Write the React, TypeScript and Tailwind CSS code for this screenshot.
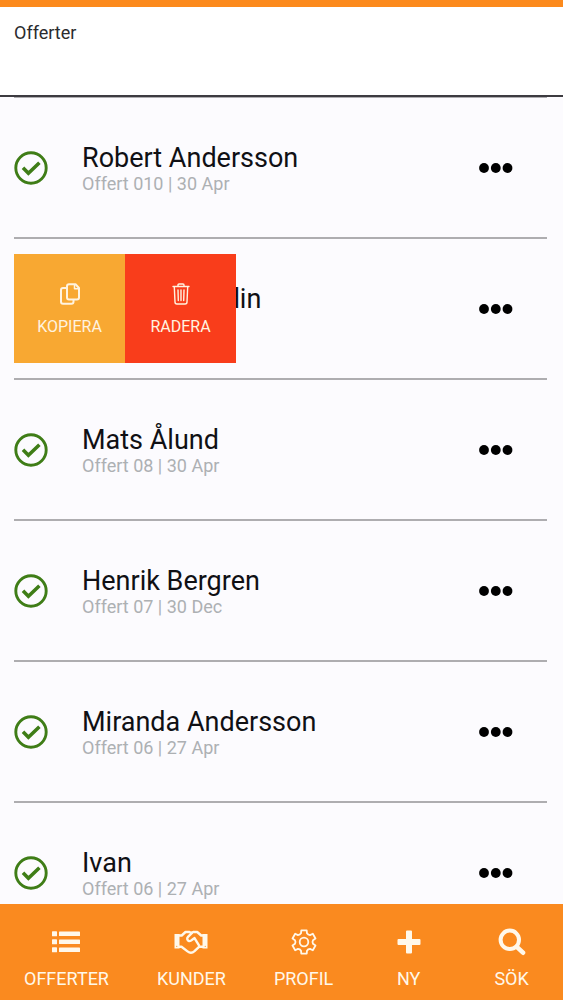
import React from 'react';

interface Offer {
  id: number;
  name: string;
  number: string;
  date: string;
  swiped?: boolean;
}

const offers: Offer[] = [
  { id: 1, name: 'Robert Andersson', number: '010', date: '30 Apr' },
  { id: 2, name: 'Marcus Sundin', number: '09', date: '30 Apr', swiped: true },
  { id: 3, name: 'Mats Ålund', number: '08', date: '30 Apr' },
  { id: 4, name: 'Henrik Bergren', number: '07', date: '30 Dec' },
  { id: 5, name: 'Miranda Andersson', number: '06', date: '27 Apr' },
  { id: 6, name: 'Ivan', number: '06', date: '27 Apr' },
];

const CheckIcon = () => (
  <svg viewBox="0 0 34 34" className="size-[34px] shrink-0 text-[#3f7d17]" fill="none" stroke="currentColor" aria-hidden="true">
    <circle cx="17" cy="17" r="15.2" strokeWidth="2.9" />
    <path d="M9 16.800l5.400 5.400L25.400 11.800" strokeWidth="3.6" />
  </svg>
);

const DotsIcon = () => (
  <svg viewBox="0 0 34 10" className="h-[10px] w-[34px]" fill="currentColor" aria-hidden="true">
    <circle cx="5" cy="5" r="4.9" />
    <circle cx="16.800" cy="5" r="4.9" />
    <circle cx="28.500" cy="5" r="4.9" />
  </svg>
);

const CopyIcon = () => (
  <svg viewBox="0 0 20 22" className="h-[22px] w-5" fill="none" stroke="currentColor" strokeWidth="2" strokeLinejoin="round" aria-hidden="true">
    <path d="M9 1.200h6.500l3.500 3.800v9.500a2 2 0 0 1-2 2H9a2 2 0 0 1-2-2V3.200a2 2 0 0 1 2-2z" />
    <path d="M14.500 1.200v4.600H19" strokeWidth="1.500" />
    <path d="M6.500 5H3a2 2 0 0 0-2 2v11.800a2 2 0 0 0 2 2h8.500a2 2 0 0 0 2-2v-2" />
  </svg>
);

const TrashIcon = () => (
  <svg viewBox="0 0 18 22" className="h-[22px] w-[18px]" fill="none" stroke="currentColor" strokeWidth="1.4" strokeLinecap="round" strokeLinejoin="round" aria-hidden="true">
    <path d="M1 3.500h16M6 3.300V2a1 1 0 0 1 1-1h4a1 1 0 0 1 1 1v1.300" />
    <path d="M2.300 3.700l.7 15.300a2 2 0 0 0 2 2h8a2 2 0 0 0 2-2l.7-15.300" />
    <path d="M6 7l.3 10.500M9 7v10.500M12 7l-.3 10.500" />
  </svg>
);

const ListIcon = () => (
  <svg viewBox="0 0 28 22" className="h-[22px] w-7" fill="currentColor" aria-hidden="true">
    {[0, 8, 16].map((y) => (
      <React.Fragment key={y}>
        <rect x="0" y={y + 0.3} width="5" height="5" rx="0.6" />
        <rect x="7" y={y + 0.6} width="21" height="4.400" rx="0.6" />
      </React.Fragment>
    ))}
  </svg>
);

const HandshakeIcon = () => (
  <svg viewBox="0 0 34 24" className="h-6 w-[34px]" fill="none" stroke="currentColor" strokeWidth="2.400" strokeLinejoin="round" strokeLinecap="round" aria-hidden="true">
    <path d="M.5 4H5.500v14.500H.5z" fill="currentColor" stroke="none" />
    <path d="M28.500 4h5v14.500h-5z" fill="currentColor" stroke="none" />
    <circle cx="2.800" cy="16.300" r=".6" fill="#fa8a1f" stroke="none" />
    <circle cx="31.200" cy="16.300" r=".6" fill="#fa8a1f" stroke="none" />
    <path d="M5 5.500h2.700L11.500 2h4l1.700 1 2-1h4l4 3.500H29" />
    <path d="M18 2.800l-4 4c-1.500 1.500-.8 3.800 1 4.300 2.200.6 3.300-2 5.500-3l4.500 7.200" />
    <path d="M5 16.800h2.500l6 4.600c2.500 1.900 4.900 1.600 7-.3l4.500-4.300h4" />
  </svg>
);

const GearIcon = () => (
  <svg viewBox="0 0 26 26" className="size-[26px]" fill="none" stroke="currentColor" strokeWidth="1.800" strokeLinejoin="round" aria-hidden="true">
    <path d="M10 4.300L10.300 1.300H15.700L16 4.300Q17 6 19 6.100L21.800 4.800L24.500 9.500L22 11.200Q21 13 22 14.800L24.500 16.500L21.800 21.200L19 19.900Q17 20 16 21.700L15.700 24.700H10.300L10 21.700Q9 20 7 19.900L4.200 21.200L1.500 16.500L4 14.800Q5 13 4 11.200L1.500 9.500L4.200 4.800L7 6.100Q9 6 10 4.300z" />
    <circle cx="13" cy="13" r="4.300" />
  </svg>
);

const PlusIcon = () => (
  <svg viewBox="0 0 24 24" className="size-6" fill="currentColor" aria-hidden="true">
    <path d="M10 .5h4a1 1 0 0 1 1 1V9h7.500a1 1 0 0 1 1 1v4a1 1 0 0 1-1 1H15v7.500a1 1 0 0 1-1 1h-4a1 1 0 0 1-1-1V15H1.500a1 1 0 0 1-1-1v-4a1 1 0 0 1 1-1H9V1.500a1 1 0 0 1 1-1z" />
  </svg>
);

const SearchIcon = () => (
  <svg viewBox="0 0 28 28" className="size-7" fill="none" stroke="currentColor" aria-hidden="true">
    <circle cx="11.800" cy="11.800" r="9.200" strokeWidth="4" />
    <path d="M18.800 18.800l6.200 5.900" strokeWidth="4.600" strokeLinecap="round" />
  </svg>
);

const navItems = [
  { label: 'OFFERTER', icon: <ListIcon /> },
  { label: 'KUNDER', icon: <HandshakeIcon /> },
  { label: 'PROFIL', icon: <GearIcon /> },
  { label: 'NY', icon: <PlusIcon />, grow: true },
  { label: 'SÖK', icon: <SearchIcon />, grow: true },
];

const actionClass = 'flex w-[111px] flex-col items-center justify-center gap-[10px] pt-1 text-[16px] leading-6 text-[#fff3e0]';

const SwipeActions = () => (
  <div className="absolute inset-y-[15px] left-0 flex">
    <button type="button" className={`${actionClass} bg-[#f8a832]`}>
      <CopyIcon />
      KOPIERA
    </button>
    <button type="button" className={`${actionClass} bg-[#f93d1b]`}>
      <TrashIcon />
      RADERA
    </button>
  </div>
);

const OfferRow: React.FC<{ offer: Offer }> = ({ offer }) => (
  <li className="relative flex items-center border-b-2 border-[#aeadb0] py-[41px] pr-[34px]">
    <CheckIcon />
    <div className="ml-[34px] min-w-0 flex-1 pt-[5px]">
      <h2 className="text-[27px] leading-7 text-[#101014]">{offer.name}</h2>
      <p className={`text-[18px] leading-6 text-[#adb0b3] ${offer.swiped ? 'invisible' : ''}`}>
        Offert {offer.number} | {offer.date}
      </p>
    </div>
    <button type="button" aria-label="Mer" className="text-black">
      <DotsIcon />
    </button>
    {offer.swiped && <SwipeActions />}
  </li>
);

export default function App() {
  return (
    <div className="flex h-screen flex-col bg-[#fcfbfe] font-[Roboto,sans-serif]">
      <header className="shrink-0 border-t-[7px] border-b-2 border-t-[#fc8a1c] border-b-[#3c3b40] bg-white px-[14px] pt-[14px] pb-[50px]">
        <h1 className="text-[18px] leading-6 text-[#2b2b2e]">Offerter</h1>
      </header>

      <main className="min-h-0 flex-1 overflow-hidden pr-4 pl-[14px]">
        <ul className="border-t border-[#aeadb0]">
          {offers.map((offer) => (
            <OfferRow key={offer.id} offer={offer} />
          ))}
        </ul>
      </main>

      <nav className="flex shrink-0 bg-[#fa8a1f] pt-6 pb-[9px] text-[#fff8ea]">
        {navItems.map((item) => (
          <a
            key={item.label}
            href="#"
            className={`flex flex-col items-center gap-[11px] text-[18px] leading-6 ${item.grow ? 'flex-1' : 'px-6'}`}
          >
            <span className="flex h-7 items-center">{item.icon}</span>
            {item.label}
          </a>
        ))}
      </nav>
    </div>
  );
}
